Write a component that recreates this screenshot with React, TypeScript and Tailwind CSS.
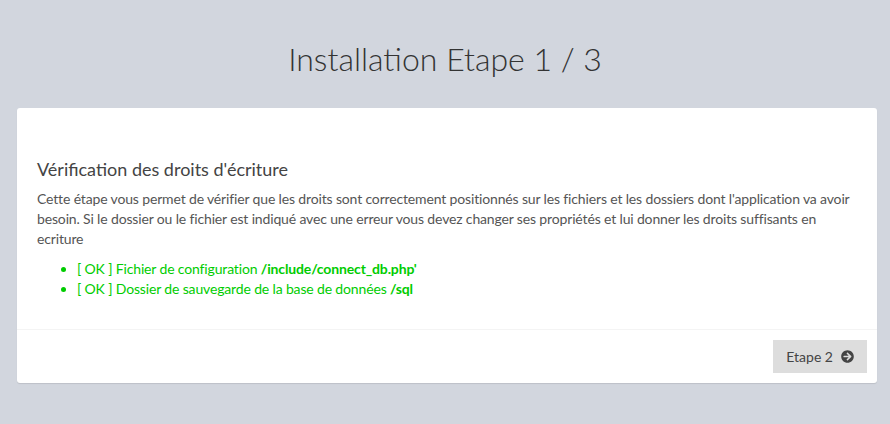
import React from "react";

function ArrowCircleRight() {
  return (
    <svg viewBox="0 0 512 512" className="h-[13px] w-[13px]" fill="currentColor">
      <path d="M256 8c137 0 248 111 248 248S393 504 256 504 8 393 8 256 119 8 256 8zm-28.9 143.6l75.5 72.4H120c-13.3 0-24 10.7-24 24v16c0 13.3 10.7 24 24 24h182.6l-75.5 72.4c-9.7 9.3-9.9 24.8-.4 34.3l11 10.9c9.4 9.4 24.6 9.4 33.9 0L404.3 273c9.4-9.4 9.4-24.6 0-33.9L271.6 106.3c-9.4-9.4-24.6-9.4-33.9 0l-11 10.9c-9.5 9.6-9.3 25.1.4 34.4z" />
    </svg>
  );
}

export default function App() {
  return (
    <div
      className="min-h-[424px] w-full bg-[#d2d6de] text-[#333]"
      style={{ fontFamily: "Lato, 'Open Sans', sans-serif" }}
    >
      <div className="pt-[39px] pb-[29px] text-center">
        <h1 className="text-[32px] font-light leading-[40px] text-[#333]">Installation Etape 1 / 3</h1>
      </div>

      <div className="ml-[17px] w-[860px] rounded-[3px] bg-white shadow-[0_1px_1px_rgba(0,0,0,0.1)]">
        <div className="h-[40px]" />
        <div className="px-[20px] pt-[9px] pb-[30px]">
          <h3 className="text-[18px] leading-[24px] text-[#444]">Vérification des droits d'écriture</h3>
          <p className="mt-[8px] text-[14px] leading-[20px] tracking-[-0.15px] text-[#555]">
            Cette étape vous permet de vérifier que les droits sont correctement positionnés sur les fichiers et les
            dossiers dont l'application va avoir besoin. Si le dossier ou le fichier est indiqué avec une erreur vous
            devez changer ses propriétés et lui donner les droits suffisants en ecriture
          </p>
          <ul className="mt-[10px] list-disc pl-[40px] text-[14px] leading-[20px] tracking-[-0.15px] text-[#00cc00]">
            <li>
              [ OK ] Fichier de configuration <b>/include/connect_db.php'</b>
            </li>
            <li>
              [ OK ] Dossier de sauvegarde de la base de données <b>/sql</b>
            </li>
          </ul>
        </div>
        <div className="flex justify-end border-t border-[#f4f4f4] px-[10px] pt-[10px] pb-[10px]">
          <button className="flex h-[33px] items-center gap-[8px] bg-[#dddddd] px-[13px] text-[14px] leading-[20px] text-[#444]">
            Etape 2
            <ArrowCircleRight />
          </button>
        </div>
      </div>
    </div>
  );
}
